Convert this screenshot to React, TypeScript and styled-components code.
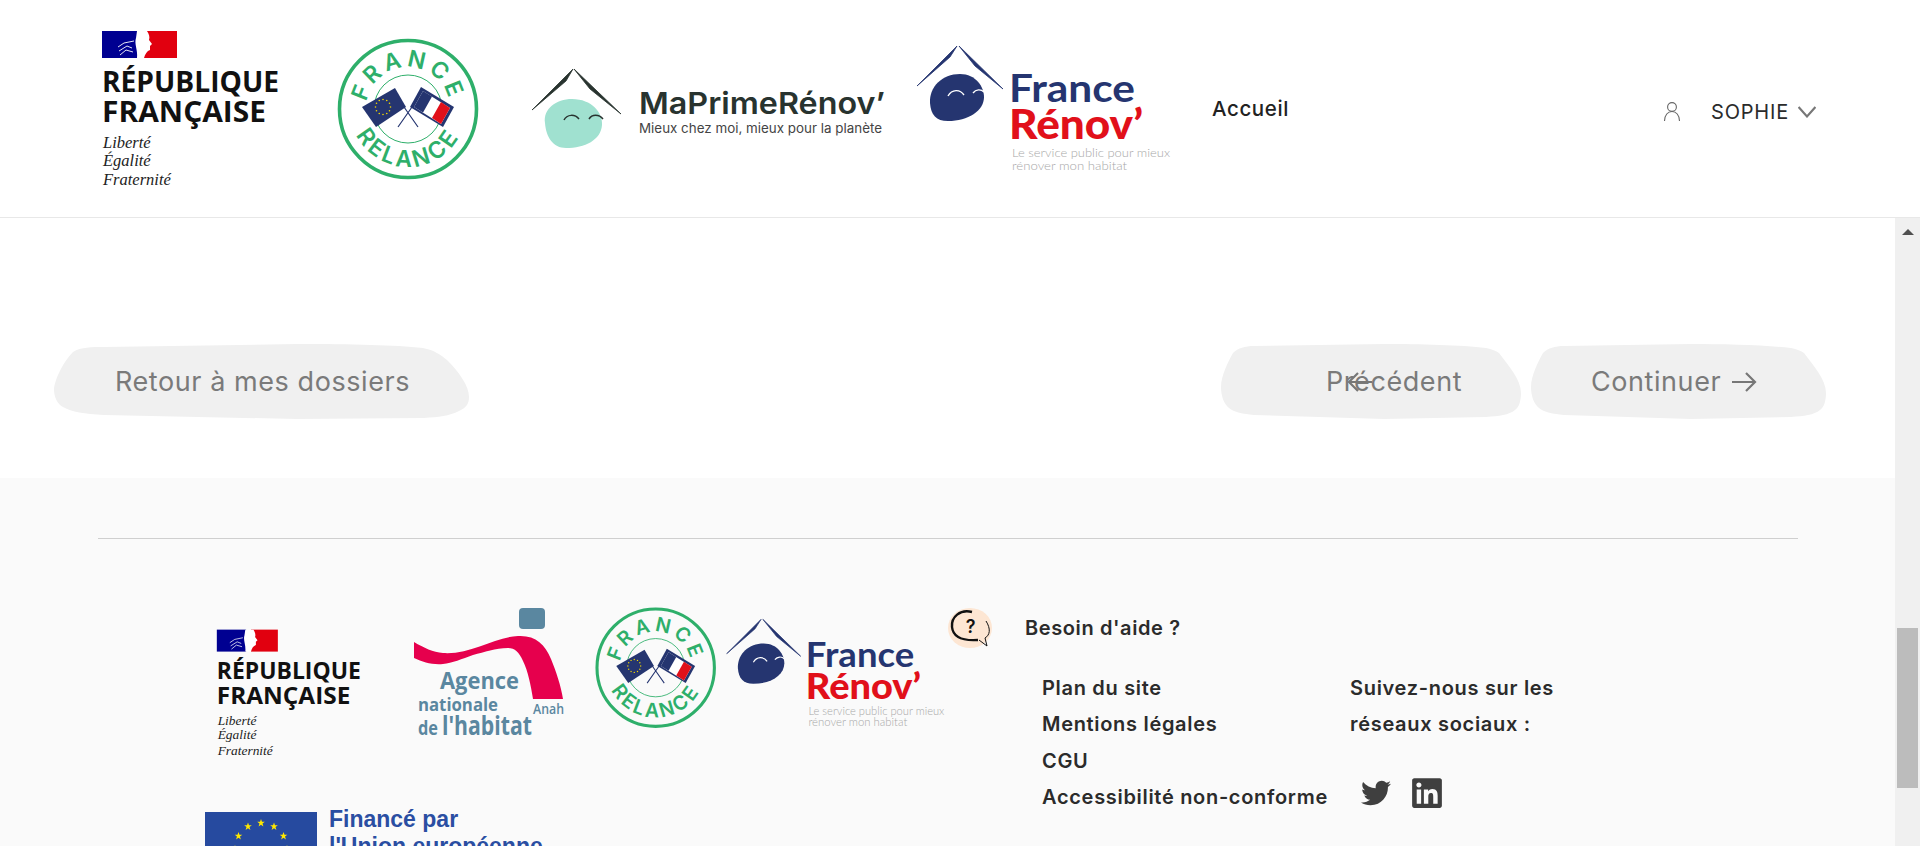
import React from "react";
import styled, { createGlobalStyle } from "styled-components";
import { FaLinkedin, FaTwitter } from "react-icons/fa";

const UI_FONT = `"Inter", "Liberation Sans", sans-serif`;

const RETOUR_SHAPE =
  "M19 8 C27 3 38 3 50 3 L243 0 C300 0 340 1 369 4 C380 6 387 11 393 16 C405 28 415 42 415 53 C415 60 412 64 405 67 C395 72 385 73 370 74 L243 75 L50 71 C30 70 18 68 9 63 C3 60 0 52 0 46 C0 38 8 19 19 8Z";
const PRECEDENT_SHAPE =
  "M12 9 C17 4 24 2 33 2 L163 0 C200 0 240 1 265 4 C271 5 275 7 278 9 C288 22 300 36 300 49 C300 57 298 63 294 66 C288 71 278 72 265 73 L163 75 L33 71 C22 70 13 68 8 64 C3 60 0 52 0 43 C0 32 7 18 12 9Z";
const CONTINUER_SHAPE =
  "M12 9 C17 4 24 2 33 2 L160 0 C195 0 235 1 260 4 C266 5 270 7 273 9 C283 22 295 36 295 49 C295 57 293 63 289 66 C283 71 273 72 260 73 L160 75 L33 71 C22 70 13 68 8 64 C3 60 0 52 0 43 C0 32 7 18 12 9Z";

const GlobalStyle = createGlobalStyle`
  html, body {
    margin: 0;
    height: 846px;
    overflow: hidden;
    background: #fff;
    font-family: ${UI_FONT};
  }
`;

const Page = styled.div`
  width: 1920px;
  height: 846px;
  display: flex;
  flex-direction: column;
  overflow: hidden;
`;

const Header = styled.header`
  height: 217px;
  flex: none;
  display: flex;
  align-items: center;
  padding: 0 104px 0 101px;
  border-bottom: 1px solid #e8e8e8;
  background: #fff;
`;

const HeaderLogo = styled.div<{ $gap: number }>`
  display: flex;
  flex: none;
  margin-left: ${({ $gap }) => $gap}px;
`;

const NavLink = styled.a`
  margin-left: 37px;
  font-size: 20.5px;
  font-weight: 500;
  color: #222;
  letter-spacing: 0.6px;
`;

const UserMenu = styled.div`
  margin-left: auto;
  margin-top: 7px;
  display: flex;
  align-items: center;
  color: #2b2b2b;
  font-size: 20px;
  letter-spacing: 0.8px;
`;

const UserName = styled.span`
  margin: 0 9px 0 30px;
`;

const Body = styled.div`
  flex: 1;
  min-height: 0;
  display: flex;
`;

const Content = styled.main`
  flex: 1;
  min-width: 0;
  overflow: hidden;
`;

const Scrollbar = styled.div`
  width: 25px;
  flex: none;
  display: flex;
  flex-direction: column;
  align-items: center;
  background: #f0f0f0;
`;

const ScrollArrow = styled.div`
  margin-top: 11px;
  border-left: 6px solid transparent;
  border-right: 6px solid transparent;
  border-bottom: 6px solid #505050;
`;

const ScrollThumb = styled.div`
  margin-top: 393px;
  width: 21px;
  height: 160px;
  background: #bcbcbc;
`;

const Actions = styled.section`
  height: 260px;
  box-sizing: border-box;
  padding: 126px 69px 0 54px;
  display: flex;
  justify-content: space-between;
  align-items: flex-start;
  background: #fff;
`;

const ActionGroup = styled.div`
  display: flex;
  gap: 10px;
`;

const BlobButton = styled.button<{ $width: number; $shape: string; $pad: number }>`
  position: relative;
  width: ${({ $width }) => $width}px;
  height: 75px;
  padding: 0 0 0 ${({ $pad }) => $pad}px;
  display: flex;
  align-items: center;
  gap: 11px;
  border: 0;
  background: #f0f0f0;
  clip-path: path("${({ $shape }) => $shape}");
  color: #7a7a7a;
  font-family: ${UI_FONT};
  font-size: 27px;
  letter-spacing: 0.57px;
`;

const BackArrow = styled.span`
  position: absolute;
  left: 126px;
  top: 27px;
  display: flex;
`;

const Footer = styled.footer`
  background: #fafafa;
  padding: 60px 97px 0 98px;
  height: 400px;
`;

const Rule = styled.hr`
  margin: 0;
  border: 0;
  border-top: 1px solid #cfcfcf;
`;

const FooterBody = styled.div`
  display: flex;
  padding: 67px 0 0 107px;
`;

const FooterLeft = styled.div`
  width: 743px;
  flex: none;
`;

const LogoRow = styled.div`
  height: 206px;
  display: flex;
  align-items: flex-start;
`;

const FooterLogo = styled.div<{ $left: number; $top: number }>`
  display: flex;
  flex: none;
  margin-left: ${({ $left }) => $left}px;
  margin-top: ${({ $top }) => $top}px;
`;

const EuRow = styled.div`
  display: flex;
  gap: 12px;
`;

const EuText = styled.div`
  font-family: "Liberation Sans", Arial, sans-serif;
  font-weight: 700;
  font-size: 23px;
  line-height: 27px;
  color: #2a4ea2;
  margin-top: -6px;
`;

const FooterRight = styled.div`
  flex: 1;
  font-size: 20px;
  font-weight: 600;
  color: #2b2b2b;
`;

const HelpRow = styled.div`
  display: flex;
  align-items: center;
  height: 44px;
  gap: 33px;
  letter-spacing: 0.6px;
`;

const LinksGrid = styled.div`
  display: grid;
  grid-template-columns: 308px 1fr;
  margin: 20px 0 0 94px;
  line-height: 36.3px;
  letter-spacing: 0.69px;
`;

const LinkList = styled.ul`
  list-style: none;
  margin: 0;
  padding: 0;
`;

const SocialIcons = styled.div`
  display: flex;
  align-items: center;
  gap: 19px;
  margin: 33px 0 0 11px;
  color: #3f3f3f;
  font-size: 30px;
`;

const marianneFont = `"Open Sans", "Liberation Sans", sans-serif`;
const serifFont = `"Liberation Serif", serif`;
const renovFont = `"Lato", sans-serif`;
const anahFont = `"Open Sans", sans-serif`;

const RepubliqueLogo = ({ width }: { width: number }) => (
  <svg width={width} height={(width * 160) / 180} viewBox="101 29 180 160">
    <rect x="102" y="31" width="36" height="27" fill="#000091" />
    <rect x="144" y="31" width="33" height="27" fill="#e1000f" />
    <path d="M137 31 L147 31 C149 34 150 37 149 40 L152 44 L150 46 L150 50 C147 51 145 54 144 58 L137 58 C138 50 134 44 136 38Z" fill="#fff" />
    <path d="M118 47 L124 43 L134 41 M119 51 L127 46 L132 48 M120 55 L126 50 L133 52" stroke="#fff" strokeWidth="0.9" fill="none" />
    <text x="102" y="92" fontFamily={marianneFont} fontWeight="700" fontSize="28" textLength="177" lengthAdjust="spacingAndGlyphs" fill="#111">RÉPUBLIQUE</text>
    <text x="102" y="122" fontFamily={marianneFont} fontWeight="700" fontSize="28" textLength="164" lengthAdjust="spacingAndGlyphs" fill="#111">FRANÇAISE</text>
    <text x="103" y="148" fontFamily={serifFont} fontStyle="italic" fontSize="16.5" fill="#222">Liberté</text>
    <text x="103" y="166" fontFamily={serifFont} fontStyle="italic" fontSize="16.5" fill="#222">Égalité</text>
    <text x="103" y="185" fontFamily={serifFont} fontStyle="italic" fontSize="16.5" fill="#222">Fraternité</text>
  </svg>
);

const starDots = Array.from({ length: 12 }, (_, i) => {
  const a = (i * Math.PI) / 6;
  return { x: 47 + 7.5 * Math.cos(a), y: 70 + 7.5 * Math.sin(a) };
});

const RelanceLogo = ({ width, idp }: { width: number; idp: string }) => (
  <svg width={width} height={width} viewBox="0 0 144 144">
    <defs>
      <path id={`${idp}-top`} d="M30 72 A42 42 0 0 1 114 72" />
      <path id={`${idp}-bottom`} d="M14 72 A58 58 0 0 0 130 72" />
    </defs>
    <circle cx="72" cy="72" r="68.5" fill="none" stroke="#2eaf6a" strokeWidth="3.6" />
    <circle cx="72" cy="72" r="34" fill="none" stroke="#2eaf6a" strokeWidth="1" />
    <text fontFamily={UI_FONT} fontWeight="600" fontSize="23" letterSpacing="4" fill="#2eaf6a" textAnchor="middle">
      <textPath href={`#${idp}-top`} startOffset="50%">FRANCE</textPath>
    </text>
    <text fontFamily={UI_FONT} fontWeight="600" fontSize="23" letterSpacing="3" fill="#2eaf6a" textAnchor="middle">
      <textPath href={`#${idp}-bottom`} startOffset="50%">RELANCE</textPath>
    </text>
    <path d="M62 90 L76 70 M82 90 L68 70" stroke="#253570" strokeWidth="1.2" />
    <path d="M26 70 L59 51 L70 70 L40 90Z" fill="#253570" />
    {starDots.map((d, i) => (
      <circle key={i} cx={d.x} cy={d.y} r="0.8" fill="#f1d600" />
    ))}
    <path d="M85 50 L118 70 L107 90 L74 70Z" fill="#253570" />
    <path d="M87 54 L114 71 L105 87 L78 70Z" fill="#fff" />
    <path d="M96 59.5 L87 75.5 L78 70 L87 54Z" fill="#253570" />
    <path d="M105 65 L114 71 L105 87 L96 81Z" fill="#e1101a" />
  </svg>
);

const MaPrimeLogo = () => (
  <svg width="360" height="95" viewBox="530 60 360 95">
    <path d="M545 122 C543 108 556 98 572 98 C592 98 603 112 602 124 C601 139 585 147 566 147 C553 147 546 136 545 122Z" fill="#a0e1d0" />
    <path d="M532 109 L573 68 L566 80Z" fill="#28332f" stroke="#28332f" strokeWidth="0.8" />
    <path d="M574 68 L621 113 L590 88Z" fill="#28332f" stroke="#28332f" strokeWidth="0.8" />
    <path d="M564 119 C567 113 575 113 579 118 M589 118 C592 113 599 113 603 118" stroke="#28332f" strokeWidth="1.5" fill="none" />
    <text x="639" y="113" fontFamily={UI_FONT} fontWeight="600" fontSize="30" textLength="246" lengthAdjust="spacingAndGlyphs" fill="#28332f">MaPrimeRénov’</text>
    <text x="639" y="132" fontFamily={UI_FONT} fontSize="13" textLength="243" lengthAdjust="spacingAndGlyphs" fill="#444">Mieux chez moi, mieux pour la planète</text>
  </svg>
);

const FranceRenovLogo = ({ width }: { width: number }) => (
  <svg width={width} height={(width * 135) / 260} viewBox="915 40 260 135">
    <path d="M930 102 C929 86 942 73 960 73 C976 73 984 86 984 96 C984 110 968 120 948 120 C936 120 931 114 930 102Z" fill="#253570" />
    <path d="M917 85 L957 45 L950 56Z" fill="#253570" stroke="#253570" strokeWidth="0.8" />
    <path d="M959 45 L1003 88 L975 65Z" fill="#253570" stroke="#253570" strokeWidth="0.8" />
    <path d="M948 95 C952 88 960 88 964 94 M973 92 C976 88 981 88 984 91" stroke="#fff" strokeWidth="1.4" fill="none" />
    <text x="1009" y="101" fontFamily={renovFont} fontWeight="700" fontSize="39" textLength="126" lengthAdjust="spacingAndGlyphs" fill="#253570">France</text>
    <text x="1009" y="138" fontFamily={renovFont} fontWeight="900" fontSize="41" textLength="134" lengthAdjust="spacingAndGlyphs" fill="#e1101a">Rénov’</text>
    <text x="1012" y="156" fontFamily={renovFont} fontWeight="300" fontSize="12.5" textLength="158" lengthAdjust="spacingAndGlyphs" fill="#a8a8a8">Le service public pour mieux</text>
    <text x="1012" y="169" fontFamily={renovFont} fontWeight="300" fontSize="12.5" textLength="115" lengthAdjust="spacingAndGlyphs" fill="#a8a8a8">rénover mon habitat</text>
  </svg>
);

const AnahLogo = () => (
  <svg width="154" height="135" viewBox="412 605 154 135">
    <rect x="519" y="607" width="26" height="21" rx="4" fill="#5a87a0" />
    <path d="M414 641 C424 647 433 651 443 652 C470 654 495 636 518 635 C535 634 545 643 551 658 C556 670 561 685 563 698 L533 698 C531 685 528 670 523 660 C519 651 515 647 508 647 C495 647 485 651 473 654 C462 658 452 662 443 663 C432 664 423 661 414 657Z" fill="#e6004d" />
    <text x="440" y="688" fontFamily={anahFont} fontWeight="700" fontSize="24" textLength="79" lengthAdjust="spacingAndGlyphs" fill="#5a87a0">Agence</text>
    <text x="418" y="710" fontFamily={anahFont} fontWeight="700" fontSize="18" textLength="80" lengthAdjust="spacingAndGlyphs" fill="#5a87a0">nationale</text>
    <text x="533" y="713" fontFamily={anahFont} fontWeight="600" fontSize="14" textLength="31" lengthAdjust="spacingAndGlyphs" fill="#5a87a0">Anah</text>
    <text x="418" y="734" fontFamily={anahFont} fontWeight="700" fontSize="19" textLength="20" lengthAdjust="spacingAndGlyphs" fill="#5a87a0">de</text>
    <text x="442" y="734" fontFamily={anahFont} fontWeight="700" fontSize="27" textLength="90" lengthAdjust="spacingAndGlyphs" fill="#5a87a0">l'habitat</text>
  </svg>
);

const euStars = Array.from({ length: 12 }, (_, i) => {
  const a = (i * Math.PI) / 6;
  return { x: 56 + 26 * Math.cos(a), y: 37 + 26 * Math.sin(a) };
});

const EuFlag = () => (
  <svg width="112" height="75" viewBox="0 0 112 75">
    <rect width="112" height="75" fill="#264a9f" />
    {euStars.map((s, i) => (
      <path
        key={i}
        transform={`translate(${s.x} ${s.y})`}
        d="M0 -4 L1 -1.2 L3.8 -1.2 L1.5 0.6 L2.4 3.4 L0 1.7 L-2.4 3.4 L-1.5 0.6 L-3.8 -1.2 L-1 -1.2Z"
        fill="#ffe800"
      />
    ))}
  </svg>
);

const HelpBubble = () => (
  <svg width="44" height="40" viewBox="0 0 44 40">
    <ellipse cx="22" cy="20" rx="22" ry="20" fill="#fde6d3" />
    <path d="M24 4 C12 1 3 9 4 19 C5 29 15 33 30 32" fill="none" stroke="#111" strokeWidth="2.4" />
    <path d="M38 13 C43 21 42 27 37 30 L39 38 L31 32" fill="none" stroke="#111" strokeWidth="1" />
    <text x="23" y="25" textAnchor="middle" fontFamily={UI_FONT} fontWeight="600" fontSize="18" fill="#111">?</text>
  </svg>
);

const PersonIcon = () => (
  <svg width="18" height="20" viewBox="0 0 18 20" fill="none" stroke="#666" strokeWidth="1.1">
    <circle cx="9" cy="5" r="4.4" />
    <path d="M1.5 19 C1.5 13 5 9.5 9 9.5 C13 9.5 16.5 13 16.5 19" />
  </svg>
);

const ChevronDown = () => (
  <svg width="18" height="12" viewBox="0 0 18 12" fill="none" stroke="#777" strokeWidth="2.1">
    <path d="M0.6 1 L9 10.5 L17.4 1" />
  </svg>
);

const ArrowGlyph = ({ left }: { left?: boolean }) => (
  <svg width="25" height="22" viewBox="0 0 25 22" fill="none" stroke="#777" strokeWidth="2.2">
    {left ? <path d="M25 11 H2 M11 2 L2 11 L11 20" /> : <path d="M0 11 H23 M14 2 L23 11 L14 20" />}
  </svg>
);

const App = (): React.JSX.Element => {
  return (
    <>
      <GlobalStyle />
      <Page>
        <Header>
          <HeaderLogo $gap={0}>
            <RepubliqueLogo width={180} />
          </HeaderLogo>
          <HeaderLogo $gap={55}>
            <RelanceLogo width={144} idp="head" />
          </HeaderLogo>
          <HeaderLogo $gap={50}>
            <MaPrimeLogo />
          </HeaderLogo>
          <HeaderLogo $gap={25}>
            <FranceRenovLogo width={260} />
          </HeaderLogo>
          <NavLink>Accueil</NavLink>
          <UserMenu>
            <PersonIcon />
            <UserName>SOPHIE</UserName>
            <ChevronDown />
          </UserMenu>
        </Header>
        <Body>
          <Content>
            <Actions>
              <BlobButton $width={415} $shape={RETOUR_SHAPE} $pad={61}>
                Retour à mes dossiers
              </BlobButton>
              <ActionGroup>
                <BlobButton $width={300} $shape={PRECEDENT_SHAPE} $pad={105}>
                  Précédent
                  <BackArrow>
                    <ArrowGlyph left />
                  </BackArrow>
                </BlobButton>
                <BlobButton $width={295} $shape={CONTINUER_SHAPE} $pad={60}>
                  Continuer
                  <ArrowGlyph />
                </BlobButton>
              </ActionGroup>
            </Actions>
            <Footer>
              <Rule />
              <FooterBody>
                <FooterLeft>
                  <LogoRow>
                    <FooterLogo $left={11} $top={21.6}>
                      <RepubliqueLogo width={146.5} />
                    </FooterLogo>
                    <FooterLogo $left={49.5} $top={0}>
                      <AnahLogo />
                    </FooterLogo>
                    <FooterLogo $left={28} $top={0}>
                      <RelanceLogo width={123.4} idp="foot" />
                    </FooterLogo>
                    <FooterLogo $left={7.6} $top={8.7}>
                      <FranceRenovLogo width={223.6} />
                    </FooterLogo>
                  </LogoRow>
                  <EuRow>
                    <EuFlag />
                    <EuText>
                      Financé par
                      <br />
                      l'Union européenne
                    </EuText>
                  </EuRow>
                </FooterLeft>
                <FooterRight>
                  <HelpRow>
                    <HelpBubble />
                    Besoin d'aide ?
                  </HelpRow>
                  <LinksGrid>
                    <LinkList>
                      <li>Plan du site</li>
                      <li>Mentions légales</li>
                      <li>CGU</li>
                      <li>Accessibilité non-conforme</li>
                    </LinkList>
                    <div>
                      Suivez-nous sur les
                      <br />
                      réseaux sociaux :
                      <SocialIcons>
                        <FaTwitter />
                        <FaLinkedin size={34} />
                      </SocialIcons>
                    </div>
                  </LinksGrid>
                </FooterRight>
              </FooterBody>
            </Footer>
          </Content>
          <Scrollbar>
            <ScrollArrow />
            <ScrollThumb />
          </Scrollbar>
        </Body>
      </Page>
    </>
  );
};

export default App;
